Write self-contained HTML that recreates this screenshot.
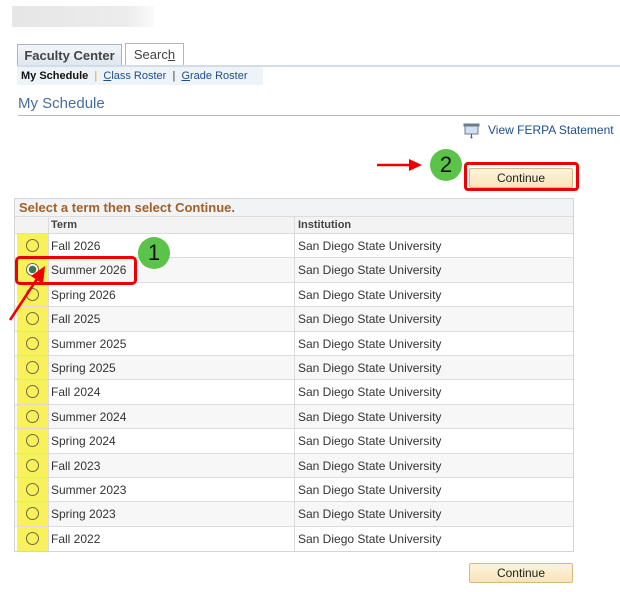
<!DOCTYPE html>
<html><head><style>
*{margin:0;padding:0;box-sizing:border-box}
body{width:620px;height:592px;background:#fff;font-family:"Liberation Sans",Arial,sans-serif;position:relative;overflow:hidden;color:#333}
.a{position:absolute}
.btn{position:absolute;width:104px;height:20px;border:1px solid #d9b77e;border-radius:2px;background:linear-gradient(#fdf3dc,#f8e4b8);font-size:12px;color:#222;text-align:center;line-height:18px}
.row{position:absolute;left:15px;width:558px;height:24.4px;border-top:1px solid #dcdcdc;font-size:12px}
.row .y{position:absolute;left:2px;top:0;width:31px;height:100%;background:#f9f15a}
.row .r{position:absolute;left:11px;top:5px;width:13px;height:13px;border:1px solid #6a6a4a;border-radius:50%;background:transparent}
.row .t{position:absolute;left:36px;top:5px}
.row .i{position:absolute;left:283px;top:5px}
.row .s{position:absolute;left:279px;top:0;width:1px;height:100%;background:#dcdcdc}
.row .s2{position:absolute;left:33px;top:0;width:1px;height:100%;background:#dcdcdc}
.circ{position:absolute;width:32px;height:32px;border-radius:50%;background:#5cc34a;color:#111;font-size:22px;text-align:center;line-height:32px}
</style></head><body>
<div class="a" style="left:12px;top:6px;width:142px;height:21px;background:linear-gradient(90deg,#e6e6e6,#ececec 80%,#fafafa)"></div>
<div class="a" style="left:17px;top:44px;width:105px;height:22px;border:1px solid #aab4c0;border-bottom:none;background:linear-gradient(#f3f6fa,#dfe6ef);font-size:13px;font-weight:bold;color:#444;text-align:center;line-height:22px">Faculty Center</div>
<div class="a" style="left:125px;top:43px;width:59px;height:23px;border:1px solid #b4b4b4;border-bottom:none;background:#fff;font-size:13px;color:#444;text-align:center;line-height:22px">Searc<u>h</u></div>
<div class="a" style="left:17px;top:65px;width:603px;height:2px;background:#d3dde8"></div>
<div class="a" style="left:17px;top:67px;width:246px;height:18px;background:#eef3f7"></div>
<div class="a" style="left:21px;top:70px;font-size:11px;color:#333"><b style="color:#111">My Schedule</b> &nbsp;<span style="color:#e8a020">|</span>&nbsp; <span style="color:#1e4e8c"><u>C</u>lass Roster</span> &nbsp;<span>|</span>&nbsp; <span style="color:#1e4e8c"><u>G</u>rade Roster</span></div>
<div class="a" style="left:18px;top:95px;font-size:15px;color:#456ea0">My Schedule</div>
<div class="a" style="left:18px;top:115px;width:602px;height:1px;background:#bbb"></div>
<svg class="a" style="left:463px;top:123px" width="17" height="16" viewBox="0 0 17 16"><rect x="0.5" y="0.5" width="16" height="3" fill="#6b7b8c"/><rect x="2" y="3" width="13" height="8" fill="#cfe0f0" stroke="#6b7b8c"/><line x1="8.5" y1="11" x2="8.5" y2="14" stroke="#555"/><circle cx="8.5" cy="14.5" r="1" fill="#555"/></svg>
<div class="a" style="left:488px;top:123px;font-size:12px;color:#1e4e8c">View FERPA Statement</div>
<svg class="a" style="left:376px;top:156px" width="50" height="18"><line x1="1" y1="9" x2="40" y2="9" stroke="#e00" stroke-width="2.5"/><path d="M33 3 L46 9 L33 15 Z" fill="#e00"/></svg>
<div class="circ" style="left:430px;top:149px">2</div>
<div class="a" style="left:464px;top:162px;width:115px;height:29px;border:3px solid #e00;border-radius:4px"></div>
<div class="btn" style="left:469px;top:168px">Continue</div>

<div class="a" style="left:14px;top:198px;width:560px;height:354px;border:2px solid #d4d4d4;border-top:1px solid #d4d4d4;background:#fff"></div>
<div class="a" style="left:15px;top:199px;width:558px;height:17px;background:#f1f3f4;font-size:13px;font-weight:bold;color:#a0612a;padding-left:4px;line-height:17px">Select a term then select Continue.</div>
<div class="a" style="left:15px;top:216px;width:558px;height:17px;background:#f3f3f3;border-top:1px solid #dcdcdc;font-size:11px;font-weight:bold;color:#444"><span class="a" style="left:36px;top:2px">Term</span><span class="a" style="left:283px;top:2px">Institution</span><span class="a" style="left:33px;top:0;width:1px;height:16px;background:#dcdcdc"></span><span class="a" style="left:279px;top:0;width:1px;height:16px;background:#dcdcdc"></span></div>

<div class="row" style="top:233px;background:#fff"><div class="y"></div><div class="r"></div><div class="s2"></div><div class="t">Fall 2026</div><div class="s"></div><div class="i">San Diego State University</div></div>
<div class="row" style="top:257.4px;background:#f7f7f7"><div class="y"></div><div class="r" style="background:radial-gradient(circle,#3d7a4a 0 3.5px,#fff 4px)"></div><div class="s2"></div><div class="t">Summer 2026</div><div class="s"></div><div class="i">San Diego State University</div></div>
<div class="row" style="top:281.8px;background:#fff"><div class="y"></div><div class="r"></div><div class="s2"></div><div class="t">Spring 2026</div><div class="s"></div><div class="i">San Diego State University</div></div>
<div class="row" style="top:306.2px;background:#f7f7f7"><div class="y"></div><div class="r"></div><div class="s2"></div><div class="t">Fall 2025</div><div class="s"></div><div class="i">San Diego State University</div></div>
<div class="row" style="top:330.6px;background:#fff"><div class="y"></div><div class="r"></div><div class="s2"></div><div class="t">Summer 2025</div><div class="s"></div><div class="i">San Diego State University</div></div>
<div class="row" style="top:355px;background:#f7f7f7"><div class="y"></div><div class="r"></div><div class="s2"></div><div class="t">Spring 2025</div><div class="s"></div><div class="i">San Diego State University</div></div>
<div class="row" style="top:379.4px;background:#fff"><div class="y"></div><div class="r"></div><div class="s2"></div><div class="t">Fall 2024</div><div class="s"></div><div class="i">San Diego State University</div></div>
<div class="row" style="top:403.8px;background:#f7f7f7"><div class="y"></div><div class="r"></div><div class="s2"></div><div class="t">Summer 2024</div><div class="s"></div><div class="i">San Diego State University</div></div>
<div class="row" style="top:428.2px;background:#fff"><div class="y"></div><div class="r"></div><div class="s2"></div><div class="t">Spring 2024</div><div class="s"></div><div class="i">San Diego State University</div></div>
<div class="row" style="top:452.6px;background:#f7f7f7"><div class="y"></div><div class="r"></div><div class="s2"></div><div class="t">Fall 2023</div><div class="s"></div><div class="i">San Diego State University</div></div>
<div class="row" style="top:477px;background:#fff"><div class="y"></div><div class="r"></div><div class="s2"></div><div class="t">Summer 2023</div><div class="s"></div><div class="i">San Diego State University</div></div>
<div class="row" style="top:501.4px;background:#f7f7f7"><div class="y"></div><div class="r"></div><div class="s2"></div><div class="t">Spring 2023</div><div class="s"></div><div class="i">San Diego State University</div></div>
<div class="row" style="top:525.8px;background:#fff;height:25px"><div class="y"></div><div class="r"></div><div class="s2"></div><div class="t">Fall 2022</div><div class="s"></div><div class="i">San Diego State University</div></div>

<div class="circ" style="left:138px;top:237px">1</div>
<div class="a" style="left:15px;top:256px;width:122px;height:29px;border:3px solid #e00;border-radius:5px"></div>
<svg class="a" style="left:5px;top:260px" width="40" height="65"><line x1="5" y1="60" x2="34" y2="16" stroke="#e00" stroke-width="2.5"/><path d="M26 16 L40 6 L38 24 Z" fill="#e00"/></svg>

<div class="btn" style="left:469px;top:563px">Continue</div>
</body></html>
